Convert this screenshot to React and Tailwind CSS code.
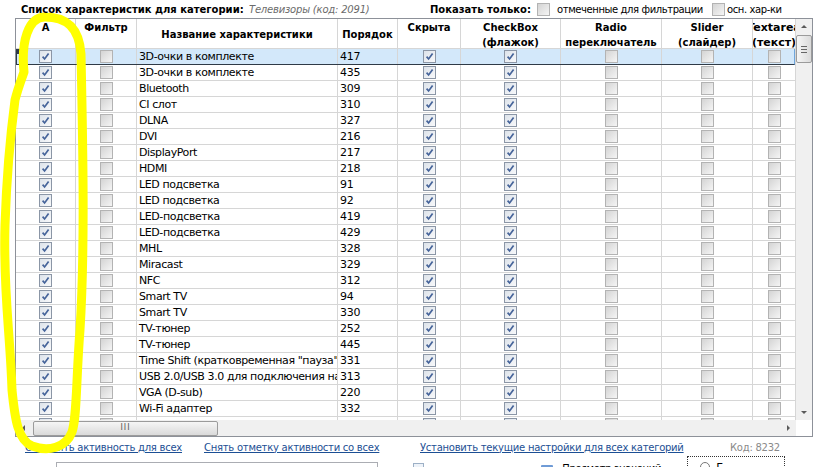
import React from 'react';

const ROWS = [
  ['3D-очки в комплекте', 417],
  ['3D-очки в комплекте', 435],
  ['Bluetooth', 309],
  ['CI слот', 310],
  ['DLNA', 327],
  ['DVI', 216],
  ['DisplayPort', 217],
  ['HDMI', 218],
  ['LED подсветка', 91],
  ['LED подсветка', 92],
  ['LED-подсветка', 419],
  ['LED-подсветка', 429],
  ['MHL', 328],
  ['Miracast', 329],
  ['NFC', 312],
  ['Smart TV', 94],
  ['Smart TV', 330],
  ['TV-тюнер', 252],
  ['TV-тюнер', 445],
  ['Time Shift (кратковременная "пауза" прямого эфира)', 331],
  ['USB 2.0/USB 3.0 для подключения накопителей', 313],
  ['VGA (D-sub)', 220],
  ['Wi-Fi адаптер', 332],
  ['', ''],
];

const COLS = 'grid grid-cols-[60px_61px_201px_60px_63px_100px_101px_91px_43px]';

function Box({ on }) {
  if (on) {
    return (
      <span className="flex h-[13px] w-[13px] items-center justify-center border border-[#8b96a6] bg-gradient-to-br from-[#dde3ea] to-[#f8f9fb]">
        <svg width="9" height="9" viewBox="0 0 9 9">
          <path d="M1.6 4.6 L3.6 7 L7.6 1.6" fill="none" stroke="#46649a" strokeWidth="1.7" />
        </svg>
      </span>
    );
  }
  return <span className="block h-[13px] w-[13px] border border-[#b3b3b3] bg-gradient-to-br from-[#d4d4d4] to-[#f5f5f5]" />;
}

function BoxCell({ on }) {
  return (
    <div className="flex items-center justify-center border-r border-[#d6d6d6]">
      <Box on={on} />
    </div>
  );
}

function Head({ lines, center, big }) {
  return (
    <div
      className={
        'flex flex-col items-center overflow-hidden border-r border-[#d6d6d6] pt-[1px] text-center leading-[15px] ' +
        (center ? 'justify-center ' : 'justify-start ') +
        (big ? 'text-[11px]' : '')
      }
    >
      {lines.map((l) => (
        <span key={l} className="whitespace-nowrap">{l}</span>
      ))}
    </div>
  );
}

function Arrow({ dir }) {
  const d = {
    up: 'M1 5 L4 2 L7 5 Z',
    down: 'M1 3 L4 6 L7 3 Z',
    left: 'M5 1 L2 4 L5 7 Z',
    right: 'M3 1 L6 4 L3 7 Z',
  }[dir];
  return (
    <svg width="8" height="8" viewBox="0 0 8 8">
      <path d={d} fill="#5a5a5a" />
    </svg>
  );
}

export default function App() {
  return (
    <div className="relative h-[467px] w-[825px] overflow-hidden bg-white font-['DejaVu_Sans',sans-serif] text-[11px] text-black">
      {/* yellow marker annotation, drawn under the top caption */}
      <svg className="pointer-events-none absolute left-0 top-0 z-10" width="825" height="467">
        <path
          d="M24 72 C21 42, 28 17, 45 17 C66 17, 79 27, 81 54 C83 150, 85 250, 80 330 C76 380, 77 418, 72 432 C66 448, 48 452, 32 446 C18 440, 15 420, 12 390 C10 330, 3 290, 5 225 C7 165, 11 130, 15 100 C18 88, 22 78, 24 72 Z"
          fill="none"
          stroke="#ffff00"
          strokeWidth="9"
          strokeLinejoin="round"
        />
      </svg>

      {/* top bar */}
      <div className="relative z-20 flex h-[18px] items-center whitespace-nowrap text-[10px]">
        <span className="ml-[21px] w-[228px] font-bold">Список характеристик для категории:</span>
        <span className="w-[181px] italic tracking-[-0.2px] text-[#6b6b6b]">Телевизоры (код: 2091)</span>
        <span className="w-[107px] font-bold">Показать только:</span>
        <span className="w-[20px]"><Box on={false} /></span>
        <span className="w-[155px] tracking-[-0.4px]">отмеченные для фильтрации</span>
        <span className="w-[15px]"><Box on={false} /></span>
        <span className="tracking-[-0.4px]">осн. хар-ки</span>
      </div>

      {/* grid */}
      <div className="ml-[15px] flex h-[419px] w-[798px] border border-[#8d9199]">
        <div className="flex w-[780px] flex-col">
          <div className={COLS + ' h-[30px] border-b border-[#d6d6d6] text-[10px] font-bold'}>
            <Head lines={['A']} />
            <Head lines={['Фильтр']} />
            <Head lines={['Название характеристики']} center />
            <Head lines={['Порядок']} center />
            <Head lines={['Скрыта']} />
            <Head lines={['CheckBox', '(флажок)']} />
            <Head lines={['Radio', 'переключатель']} />
            <Head lines={['Slider', '(слайдер)']} />
            <Head lines={['Textarea', '(текст)']} big />
          </div>
          <div className="relative h-[371px] overflow-hidden">
            {ROWS.map(([name, ord], i) => (
              <div
                key={i}
                className={COLS + ' h-[16px] border-b border-[#d6d6d6] ' + (i === 0 ? 'bg-[#d3e8fa]' : '')}
              >
                <BoxCell on />
                <BoxCell on={false} />
                <div className="overflow-hidden whitespace-nowrap border-r border-[#d6d6d6] pl-[2px] leading-[15px] tracking-[-0.4px]">{name}</div>
                <div className="overflow-hidden whitespace-nowrap border-r border-[#d6d6d6] pl-[2px] leading-[15px] tracking-[-0.3px]">{ord}</div>
                <BoxCell on />
                <BoxCell on />
                <BoxCell on={false} />
                <BoxCell on={false} />
                <BoxCell on={false} />
              </div>
            ))}
            <div className="absolute left-0 right-[1px] top-[-1px] h-[17px] border border-[#2f3a46] border-r-[#6fa6dc]" />
            <div className="absolute left-0 top-0 h-[5px] w-[9px] bg-[#2f3a46]" />
          </div>
          {/* horizontal scrollbar */}
          <div className="flex h-[16px] items-center bg-[#f0f0f0]">
            <div className="flex w-[16px] items-center justify-center"><Arrow dir="left" /></div>
            <div className="ml-[1px] flex h-[15px] w-[185px] items-center justify-center rounded-[2px] border border-[#9b9b9b] bg-gradient-to-b from-[#f6f6f6] to-[#dadada]">
              <span className="text-[8px] leading-none tracking-[1px] text-[#555]">III</span>
            </div>
            <div className="flex-1" />
            <div className="flex w-[16px] items-center justify-center"><Arrow dir="right" /></div>
          </div>
        </div>
        {/* vertical scrollbar */}
        <div className="flex w-[16px] flex-col">
          <div className="flex flex-1 flex-col bg-[#f0f0f0]">
            <div className="flex h-[16px] items-center justify-center"><Arrow dir="up" /></div>
            <div className="flex h-[28px] flex-col items-center justify-center gap-[2px] rounded-[2px] border border-[#9b9b9b] bg-gradient-to-r from-[#f6f6f6] to-[#dadada]">
              <span className="block h-px w-[6px] bg-[#666]" />
              <span className="block h-px w-[6px] bg-[#666]" />
              <span className="block h-px w-[6px] bg-[#666]" />
            </div>
            <div className="flex-1" />
            <div className="flex h-[16px] items-center justify-center"><Arrow dir="down" /></div>
          </div>
          <div className="h-[16px] bg-white" />
        </div>
      </div>

      {/* links */}
      <div className="mt-[2px] flex h-[16px] items-center whitespace-nowrap text-[10px] tracking-[-0.25px] text-[#1c4f94]">
        <span className="ml-[25px] w-[179px]"><span className="underline">Отметить активность для всех</span></span>
        <span className="w-[216px]"><span className="underline">Снять отметку активности со всех</span></span>
        <span className="w-[310px]"><span className="underline">Установить текущие настройки для всех категорий</span></span>
        <span className="text-[#8a8a8a]">Код: 8232</span>
      </div>

      {/* partially visible bottom row */}
      <div className="flex items-start whitespace-nowrap pt-[3px]">
        <span className="ml-[15px] mt-[6px] text-[11px]">П</span>
        <div className="ml-[33px] mt-[4px] h-[20px] w-[322px] border border-[#abadb3] bg-white" />
        <div className="ml-[35px] mt-[5px] h-[14px] w-[11px] border border-[#9db0c6] bg-[#eef3f9]" />
        <span className="ml-[12px] mt-[6px] w-[105px] text-[11px] font-bold">Сохранить</span>
        <div className="mt-[7px] h-[12px] w-[12px] rounded-[1px] bg-[#6f9bd6]" />
        <span className="ml-[9px] mt-[5px] w-[125px] text-[10px] leading-[11px] tracking-[-0.3px]">Просмотр значений</span>
        <div className="mt-[-2px] flex h-[24px] w-[98px] items-start border border-dotted border-[#333] pl-[12px] pt-[5px]">
          <span className="h-[10px] w-[10px] rounded-full border border-[#777]" />
          <span className="ml-[6px] text-[11px] leading-[11px]">Г</span>
        </div>
      </div>
    </div>
  );
}
